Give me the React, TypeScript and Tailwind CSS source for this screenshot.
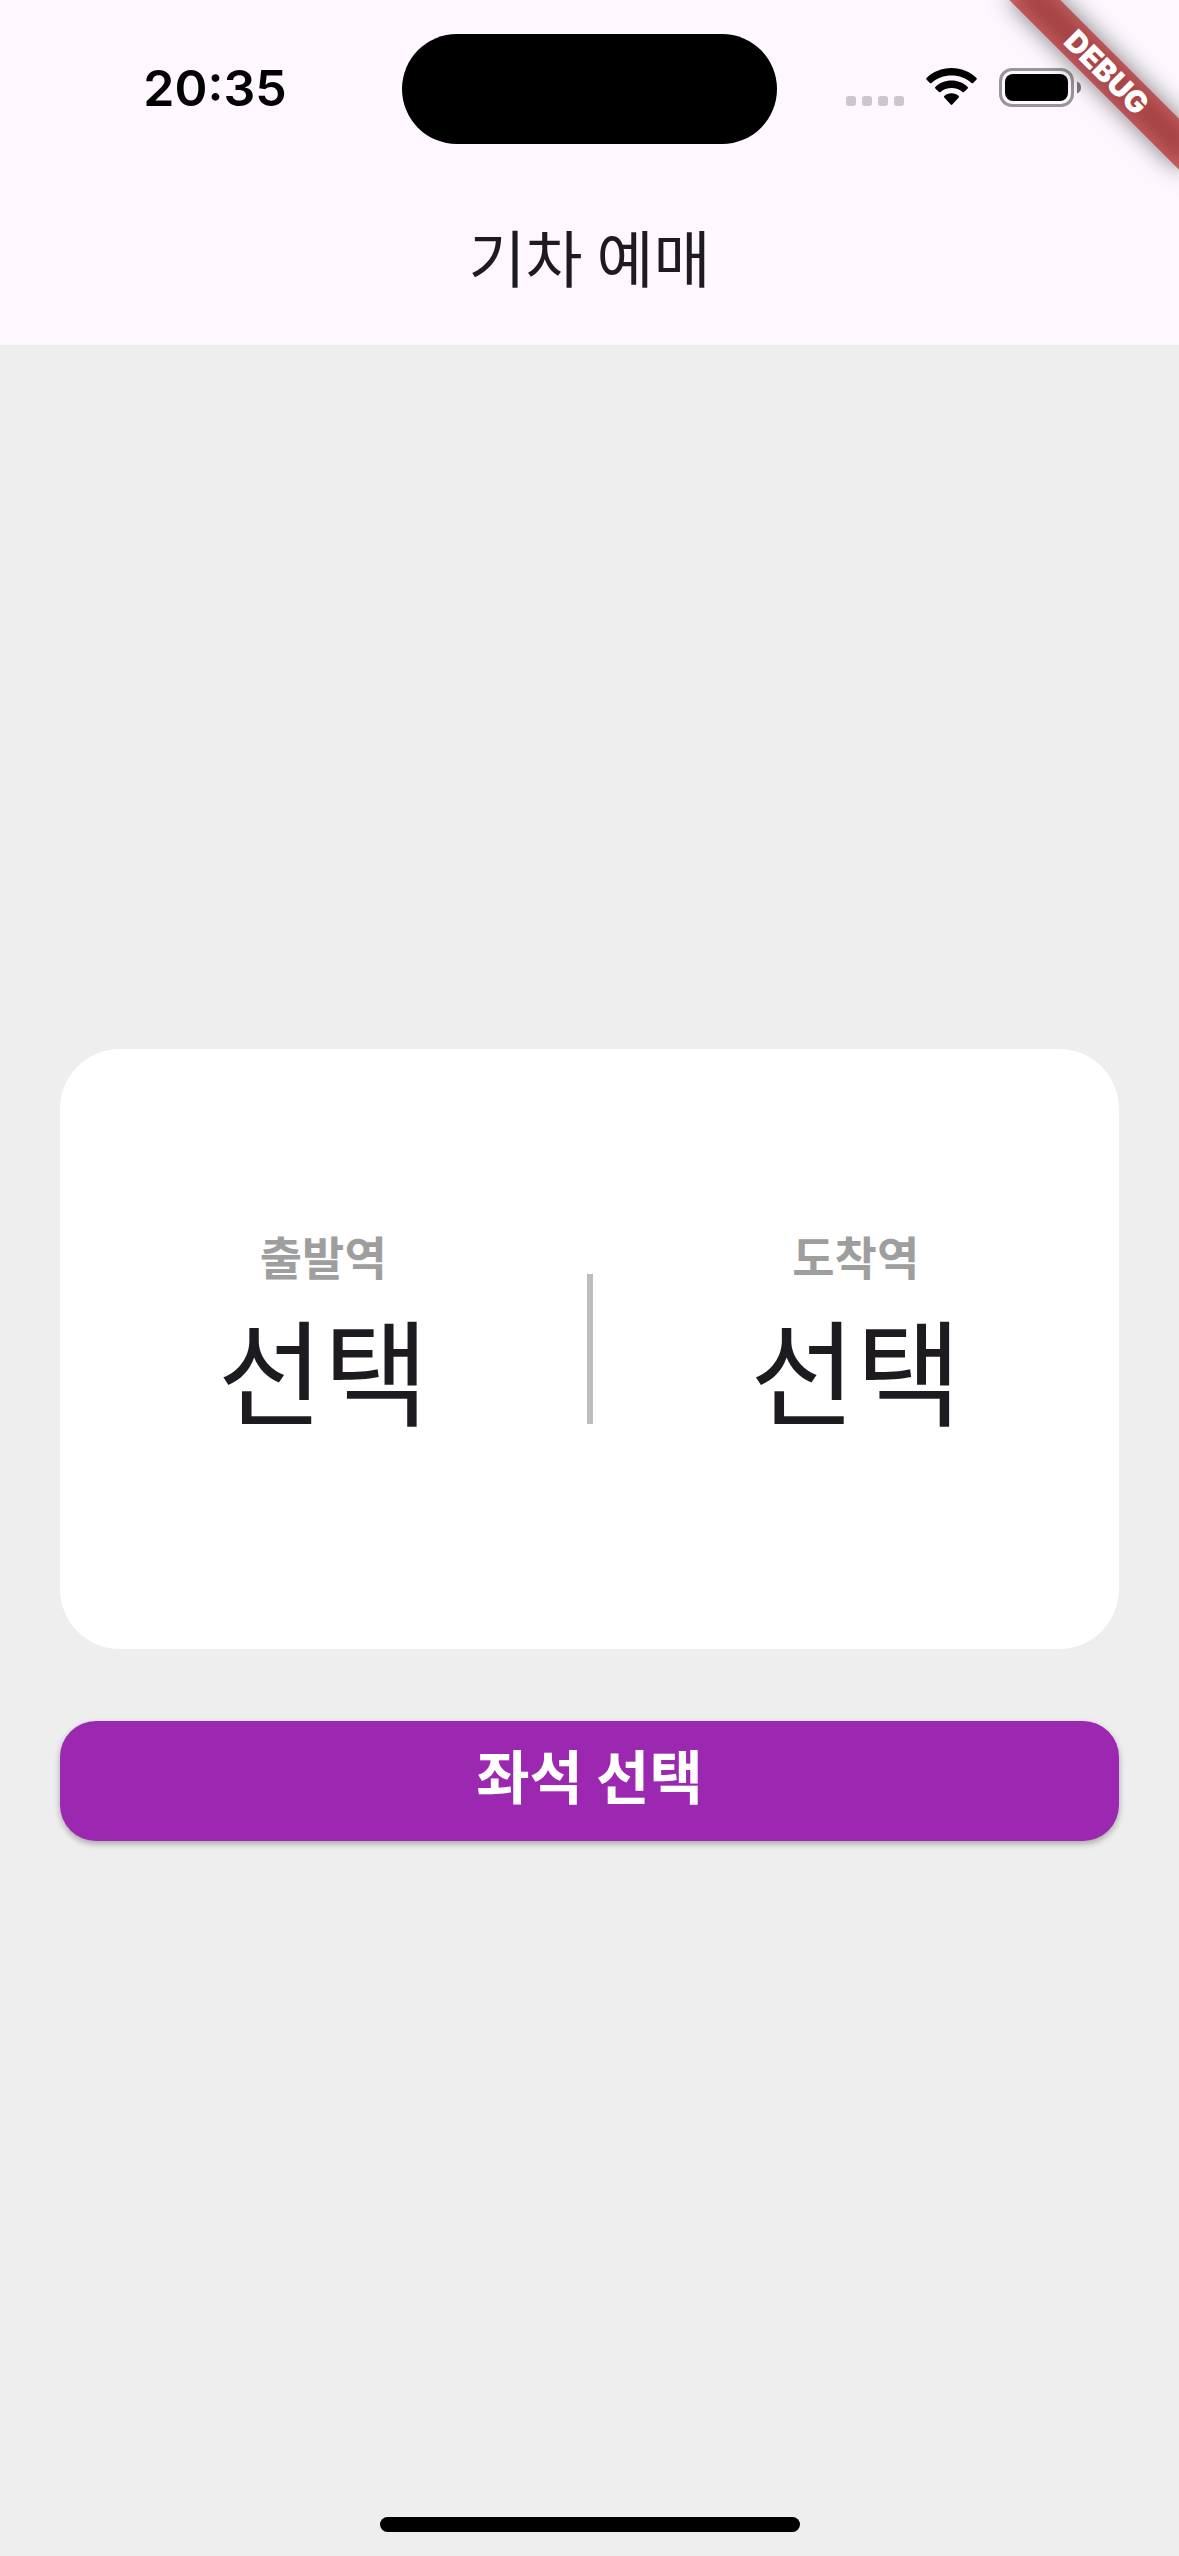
import { useId, useState } from 'react';

function SignalDots() {
  return (
    <div className="mt-7 flex gap-1.5">
      <span className="size-2.5 rounded-[3px] bg-[#cbc5cc]" />
      <span className="size-2.5 rounded-[3px] bg-[#cbc5cc]" />
      <span className="size-2.5 rounded-[3px] bg-[#cbc5cc]" />
      <span className="size-2.5 rounded-[3px] bg-[#cbc5cc]" />
    </div>
  );
}

function WifiIcon() {
  return (
    <svg width="51" height="38" viewBox="0 0 51 38" aria-hidden="true">
      <path d="M25.5 0C15.8 0 6.9 3.7.5 10Q-.2 10.8.5 11.5L3.9 15Q4.7 15.7 5.5 15C10.8 10.2 17.8 7.6 25.5 7.6S40.2 10.2 45.5 15Q46.3 15.7 47.1 15L50.5 11.5Q51.2 10.8 50.5 10C44.1 3.7 35.2 0 25.5 0Z" />
      <path d="M25.5 12.6C19.2 12.6 13.5 15 9.3 19Q8.6 19.7 9.3 20.4L13 24Q13.7 24.7 14.5 24C17.4 21.5 21.3 20 25.5 20S33.6 21.5 36.5 24Q37.3 24.7 38 24L41.7 20.4Q42.4 19.7 41.7 19C37.5 15 31.8 12.6 25.5 12.6Z" />
      <path d="M25.5 25.3C22.7 25.3 20.2 26.3 18.3 28Q17.6 28.7 18.3 29.4L24.7 36.5Q25.5 37.3 26.3 36.5L32.7 29.4Q33.4 28.7 32.7 28C30.8 26.3 28.3 25.3 25.5 25.3Z" />
    </svg>
  );
}

function BatteryIcon() {
  return (
    <svg width="82" height="39" viewBox="0 0 82 39" aria-hidden="true">
      <rect x="1.5" y="1.5" width="72" height="36" rx="11.5" fill="none" stroke="#99949a" strokeWidth="3" />
      <rect x="6" y="6" width="63" height="27" rx="8" />
      <path d="M78 13.5Q82 15 82 19.5T78 25.5Z" fill="#7c787d" />
    </svg>
  );
}

function StatusBar() {
  return (
    <div className="grid h-[177px] grid-cols-[1fr_375px_1fr] items-start">
      <div className="pt-14 pl-7 text-center font-['Inter',sans-serif] text-[50px] leading-[64px] font-semibold text-black">
        20:35
      </div>
      <div className="mt-[34px] h-[110px] rounded-full bg-black" />
      <div className="flex justify-end gap-[22px] pt-[68px] pr-[98px]">
        <SignalDots />
        <WifiIcon />
        <BatteryIcon />
      </div>
    </div>
  );
}

function DebugBanner() {
  return (
    <div className="pointer-events-none absolute top-0 right-0 size-56 overflow-hidden">
      <div className="absolute top-[84px] left-[104px] h-9 w-60 origin-[120px_-84px] rotate-45">
        <div className="absolute inset-0 bg-black/50 blur-[12px]" />
        <div className="relative bg-[#b71c1c]/63 text-center font-['Inter',sans-serif] text-[30px] leading-9 font-black text-white">
          DEBUG
        </div>
      </div>
    </div>
  );
}

function StationPicker({ label, value, onSelect }: { label: string; value: string; onSelect: () => void }) {
  const id = useId();
  return (
    <div className="flex flex-1 flex-col items-center pb-6">
      <span id={id} className="text-[46px] leading-[60px] font-bold text-[#9e9e9e]">
        {label}
      </span>
      <button type="button" aria-describedby={id} onClick={onSelect} className="text-[115px] leading-[164px] text-[#1d1b20]">
        {value}
      </button>
    </div>
  );
}

export default function App() {
  const [departure, setDeparture] = useState('선택');
  const [arrival, setArrival] = useState('선택');

  return (
    <div className="relative flex min-h-screen flex-col overflow-hidden bg-[#eeeeee] font-['Noto_Sans_CJK_KR',sans-serif]">
      <header className="bg-[#fef7ff]">
        <StatusBar />
        <h1 className="h-[168px] text-center text-[62px] leading-[158px] text-[#1d1b20]">기차 예매</h1>
      </header>

      <main className="flex flex-1 flex-col justify-center px-[60px]">
        <section className="flex h-[600px] items-center rounded-[60px] bg-white">
          <StationPicker label="출발역" value={departure} onSelect={() => setDeparture('선택')} />
          <div className="h-[150px] w-1.5 bg-[#bdbdbd]" />
          <StationPicker label="도착역" value={arrival} onSelect={() => setArrival('선택')} />
        </section>
        <button
          type="button"
          className="mt-[72px] mb-3 h-[120px] rounded-[36px] bg-[#9c27b0] pb-3.5 text-[58px] leading-[100px] font-bold text-white shadow-[0_3px_6px_rgba(0,0,0,0.3)]"
        >
          좌석 선택
        </button>
      </main>

      <div className="absolute bottom-6 left-1/2 h-[15px] w-[420px] -translate-x-1/2 rounded-full bg-black" />
      <DebugBanner />
    </div>
  );
}
